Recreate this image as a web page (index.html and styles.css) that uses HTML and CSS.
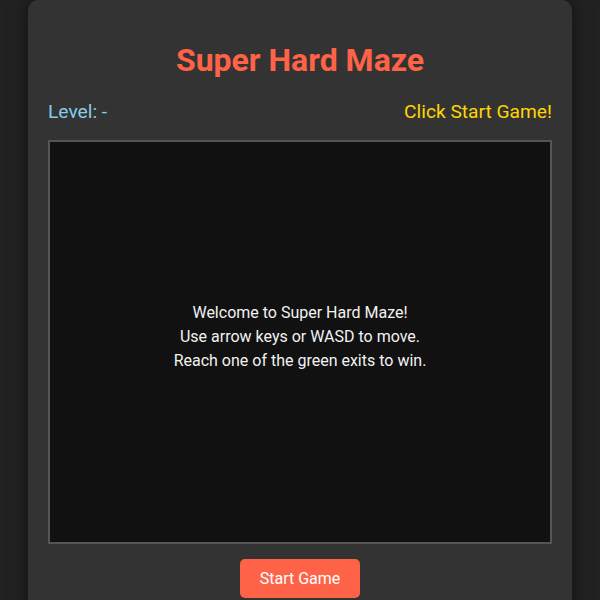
FILE: index.html
```html
<!DOCTYPE html>
<html>
<head>
<meta charset="utf-8">
<link rel="stylesheet" href="styles.css">
</head>
<body>
<div class="game">
  <h1 class="title">Super Hard Maze</h1>
  <div class="info">
    <span class="level">Level: -</span>
    <span class="status">Click Start Game!</span>
  </div>
  <div class="board">
    <p>Welcome to Super Hard Maze!</p>
    <p>Use arrow keys or WASD to move.</p>
    <p>Reach one of the green exits to win.</p>
  </div>
  <button class="start">Start Game</button>
</div>
</body>
</html>
```
FILE: styles.css
```css
html, body {
  margin: 0;
  padding: 0;
}
body {
  background: #222;
  font-family: Roboto, "Liberation Sans", sans-serif;
  color: #fff;
  display: flex;
  justify-content: center;
  height: 600px;
  overflow: hidden;
}
.game {
  width: 504px;
  padding: 20px;
  background: #333;
  border-radius: 10px;
  box-shadow: 0 0 20px rgba(0, 0, 0, 0.5);
  display: flex;
  flex-direction: column;
  align-items: center;
  flex-shrink: 0;
  height: 640px;
}
.title {
  color: #ff6347;
  font-size: 32px;
  font-weight: 700;
  margin: 21px 0 21px;
  line-height: 38px;
}
.info {
  width: 100%;
  display: flex;
  justify-content: space-between;
  font-size: 19.2px;
  line-height: 23px;
  margin-bottom: 17px;
}
.level { color: #87ceeb; }
.status { color: #ffd700; }
.board {
  box-sizing: border-box;
  width: 504px;
  height: 404px;
  padding-bottom: 10px;
  background: #111;
  border: 2px solid #555;
  display: flex;
  flex-direction: column;
  justify-content: center;
  align-items: center;
  font-size: 16px;
  color: #f2f2f2;
}
.board p {
  margin: 0;
  line-height: 24px;
}
.start {
  margin-top: 15px;
  background: #ff6347;
  color: #fff;
  border: none;
  border-radius: 5px;
  padding: 10px 20px;
  font-family: Roboto, "Liberation Sans", sans-serif;
  font-size: 16px;
  line-height: 19px;
}
```
